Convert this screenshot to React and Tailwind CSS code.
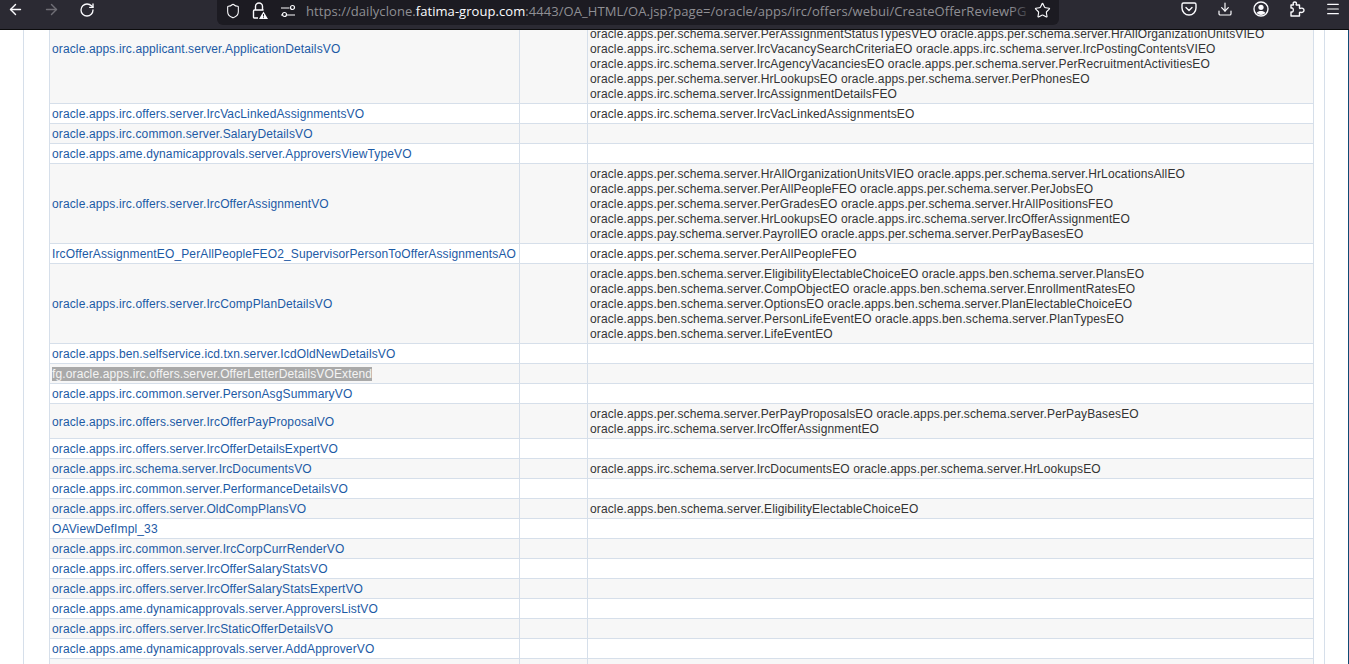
import { ArrowLeft, ArrowRight, RotateCw, Shield, Star, Download, Menu } from 'lucide-react';

const rows = [
  { name: 'oracle.apps.irc.applicant.server.ApplicationDetailsVO', first: true, entities: [
    'oracle.apps.per.schema.server.PerAssignmentStatusTypesVEO oracle.apps.per.schema.server.HrAllOrganizationUnitsVIEO',
    'oracle.apps.irc.schema.server.IrcVacancySearchCriteriaEO oracle.apps.irc.schema.server.IrcPostingContentsVIEO',
    'oracle.apps.irc.schema.server.IrcAgencyVacanciesEO oracle.apps.per.schema.server.PerRecruitmentActivitiesEO',
    'oracle.apps.per.schema.server.HrLookupsEO oracle.apps.per.schema.server.PerPhonesEO',
    'oracle.apps.irc.schema.server.IrcAssignmentDetailsFEO',
  ] },
  { name: 'oracle.apps.irc.offers.server.IrcVacLinkedAssignmentsVO', entities: ['oracle.apps.irc.schema.server.IrcVacLinkedAssignmentsEO'] },
  { name: 'oracle.apps.irc.common.server.SalaryDetailsVO' },
  { name: 'oracle.apps.ame.dynamicapprovals.server.ApproversViewTypeVO' },
  { name: 'oracle.apps.irc.offers.server.IrcOfferAssignmentVO', entities: [
    'oracle.apps.per.schema.server.HrAllOrganizationUnitsVIEO oracle.apps.per.schema.server.HrLocationsAllEO',
    'oracle.apps.per.schema.server.PerAllPeopleFEO oracle.apps.per.schema.server.PerJobsEO',
    'oracle.apps.per.schema.server.PerGradesEO oracle.apps.per.schema.server.HrAllPositionsFEO',
    'oracle.apps.per.schema.server.HrLookupsEO oracle.apps.irc.schema.server.IrcOfferAssignmentEO',
    'oracle.apps.pay.schema.server.PayrollEO oracle.apps.per.schema.server.PerPayBasesEO',
  ] },
  { name: 'IrcOfferAssignmentEO_PerAllPeopleFEO2_SupervisorPersonToOfferAssignmentsAO', entities: ['oracle.apps.per.schema.server.PerAllPeopleFEO'] },
  { name: 'oracle.apps.irc.offers.server.IrcCompPlanDetailsVO', entities: [
    'oracle.apps.ben.schema.server.EligibilityElectableChoiceEO oracle.apps.ben.schema.server.PlansEO',
    'oracle.apps.ben.schema.server.CompObjectEO oracle.apps.ben.schema.server.EnrollmentRatesEO',
    'oracle.apps.ben.schema.server.OptionsEO oracle.apps.ben.schema.server.PlanElectableChoiceEO',
    'oracle.apps.ben.schema.server.PersonLifeEventEO oracle.apps.ben.schema.server.PlanTypesEO',
    'oracle.apps.ben.schema.server.LifeEventEO',
  ] },
  { name: 'oracle.apps.ben.selfservice.icd.txn.server.IcdOldNewDetailsVO' },
  { name: 'fg.oracle.apps.irc.offers.server.OfferLetterDetailsVOExtend', selected: true },
  { name: 'oracle.apps.irc.common.server.PersonAsgSummaryVO' },
  { name: 'oracle.apps.irc.offers.server.IrcOfferPayProposalVO', entities: [
    'oracle.apps.per.schema.server.PerPayProposalsEO oracle.apps.per.schema.server.PerPayBasesEO',
    'oracle.apps.irc.schema.server.IrcOfferAssignmentEO',
  ] },
  { name: 'oracle.apps.irc.offers.server.IrcOfferDetailsExpertVO' },
  { name: 'oracle.apps.irc.schema.server.IrcDocumentsVO', entities: ['oracle.apps.irc.schema.server.IrcDocumentsEO oracle.apps.per.schema.server.HrLookupsEO'] },
  { name: 'oracle.apps.irc.common.server.PerformanceDetailsVO' },
  { name: 'oracle.apps.irc.offers.server.OldCompPlansVO', entities: ['oracle.apps.ben.schema.server.EligibilityElectableChoiceEO'] },
  { name: 'OAViewDefImpl_33' },
  { name: 'oracle.apps.irc.common.server.IrcCorpCurrRenderVO' },
  { name: 'oracle.apps.irc.offers.server.IrcOfferSalaryStatsVO' },
  { name: 'oracle.apps.irc.offers.server.IrcOfferSalaryStatsExpertVO' },
  { name: 'oracle.apps.ame.dynamicapprovals.server.ApproversListVO' },
  { name: 'oracle.apps.irc.offers.server.IrcStaticOfferDetailsVO' },
  { name: 'oracle.apps.ame.dynamicapprovals.server.AddApproverVO' },
  { name: '' },
];

function LockWarning() {
  return (
    <svg className="h-[18px] w-[18px]" viewBox="0 0 18 18" fill="none" stroke="#fbfbfe" strokeWidth="1.4">
      <path d="M4.5 8V4.5a3.5 3.5 0 0 1 7 0V8" />
      <path d="M7 16H3.5a1 1 0 0 1-1-1V9a1 1 0 0 1 1-1h9" />
      <path d="M12.5 9.5l4.5 7.5H8z" fill="#fbfbfe" stroke="none" />
      <path d="M12.5 12v2.5M12.5 15.3v.8" stroke="#2b2a33" strokeWidth="1" />
    </svg>
  );
}

function PermissionsIcon() {
  return (
    <svg className="h-[16px] w-[16px]" viewBox="0 0 16 16" fill="none" stroke="#fbfbfe" strokeWidth="1.2">
      <path d="M1 5h8.5M1 12h1M7 12h8" />
      <circle cx="12.5" cy="4.5" r="2" />
      <circle cx="4.5" cy="11.5" r="2" />
    </svg>
  );
}

function PocketIcon() {
  return (
    <svg className="h-[16px] w-[16px]" viewBox="0 0 16 16" fill="none" stroke="#fbfbfe" strokeWidth="1.4" strokeLinecap="round" strokeLinejoin="round">
      <path d="M2.5 2h11A1.5 1.5 0 0 1 15 3.5V7A7 7 0 0 1 1 7V3.5A1.5 1.5 0 0 1 2.5 2z" />
      <path d="M5 6.5l3 3 3-3" />
    </svg>
  );
}

function AccountIcon() {
  return (
    <svg className="h-[16px] w-[16px]" viewBox="0 0 16 16" fill="none" stroke="#fbfbfe" strokeWidth="1.4">
      <circle cx="8" cy="8" r="7" />
      <circle cx="8" cy="6.3" r="2.6" fill="#fbfbfe" stroke="none" />
      <path d="M3.6 12c1-1.6 2.6-2.1 4.4-2.1s3.4.5 4.4 2.1a6 6 0 0 1-8.8 0z" fill="#fbfbfe" stroke="none" />
    </svg>
  );
}

// firefox's extensions piece, lucide's one has too many knobs
function ExtensionIcon() {
  return (
    <svg className="h-[16px] w-[16px]" viewBox="0 0 16 16" fill="none" stroke="#fbfbfe" strokeWidth="1.4" strokeLinejoin="round">
      <path d="M2 15h8.5v-3.2c0-.5.4-.8.8-.6 1.7.8 3.7-.1 3.7-1.9s-2-2.7-3.7-1.9c-.4.2-.8-.1-.8-.6V4H7.8c-.5 0-.8-.4-.6-.8C7.9 1.8 7.2 1 5.8 1S3.7 1.8 4.4 3.2c.2.4-.1.8-.6.8H2v3h1.2c1.5 0 1.5 4 0 4H2z" />
    </svg>
  );
}

function Toolbar() {
  return (
    <div className="flex h-[30px] shrink-0 items-start justify-between border-b border-[#0c0c0d] bg-[#2b2a33]">
      <div className="flex w-[217px] items-center pl-[7px] pt-[1px]">
        <ArrowLeft className="h-[17px] w-[17px] text-[#fbfbfe]" strokeWidth={2} />
        <ArrowRight className="ml-[19px] h-[17px] w-[17px] text-[#6f6e75]" strokeWidth={2} />
        <RotateCw className="ml-[19px] h-[16px] w-[16px] text-[#fbfbfe]" strokeWidth={2} />
      </div>
      <div className="flex h-[25px] w-[842px] items-center rounded-b-md bg-[#1c1b22] pb-[4px] pl-[8px]">
        <Shield className="h-[16px] w-[16px] text-[#fbfbfe]" strokeWidth={1.6} />
        <div className="ml-[10px]"><LockWarning /></div>
        <div className="ml-[11px]"><PermissionsIcon /></div>
        <div className="relative ml-[10px] w-[728px] overflow-hidden whitespace-nowrap font-['Open_Sans',sans-serif] text-[13px] leading-[20px] tracking-[0.06px] text-[#8f8f94]">
          https://dailyclone.<span className="text-[#fbfbfe]">fatima-group.com</span>:4443/OA_HTML/OA.jsp?page=/oracle/apps/irc/offers/webui/CreateOfferReviewPG
          <div className="absolute inset-y-0 right-0 w-[24px] bg-gradient-to-r from-transparent to-[#1c1b22]" />
        </div>
        <Star className="h-[17px] w-[17px] text-[#fbfbfe]" strokeWidth={1.6} />
      </div>
      <div className="flex w-[290px] items-center justify-end gap-[20px] pr-[8px] pt-[1px]">
        <PocketIcon />
        <Download className="h-[16px] w-[16px] text-[#fbfbfe]" strokeWidth={1.8} />
        <AccountIcon />
        <ExtensionIcon />
        <Menu className="h-[16px] w-[16px] text-[#fbfbfe]" strokeWidth={1.8} />
      </div>
    </div>
  );
}

function Row({ row, index }) {
  const bg = index % 2 === 0 ? 'bg-[#f7f7f7]' : 'bg-white';
  const cell = 'border border-[#d6dfea] px-[2px] align-middle';
  return (
    <tr className={bg}>
      <td className={`${cell} pt-[3px] pb-[1px] ${row.first ? 'h-[110px]' : 'h-[20px]'}`}>
        {row.selected ? (
          <span className="bg-[#a9a9a9] text-[#f4f4f4]">{row.name}</span>
        ) : (
          <a href="#" className="text-[#1c5aa5]">{row.name}</a>
        )}
      </td>
      <td className={cell}></td>
      <td className={`${cell} pb-[1px] text-[#333333] ${row.first ? 'pt-[33px]' : 'pt-[3px]'}`}>
        {row.entities && row.entities.map((line) => <div key={line}>{line}</div>)}
      </td>
    </tr>
  );
}

export default function App() {
  return (
    <div className="flex h-[664px] w-[1349px] flex-col overflow-hidden bg-white font-['Liberation_Sans',Arial,sans-serif] text-[12px] leading-[15px] tracking-[0.13px]">
      <Toolbar />
      <div className="min-h-0 flex-1 overflow-hidden border-r border-[#0f4c75]">
        <div className="ml-[23px] mt-[-37px] w-[1302px] border-x border-[#d6dfea] pl-[25px] pr-[9px]">
          <table className="w-[1265px] table-fixed border-collapse">
            <colgroup>
              <col className="w-[470px]" />
              <col className="w-[68px]" />
              <col />
            </colgroup>
            <tbody>
              {rows.map((row, i) => <Row key={i} row={row} index={i} />)}
            </tbody>
          </table>
        </div>
      </div>
    </div>
  );
}
